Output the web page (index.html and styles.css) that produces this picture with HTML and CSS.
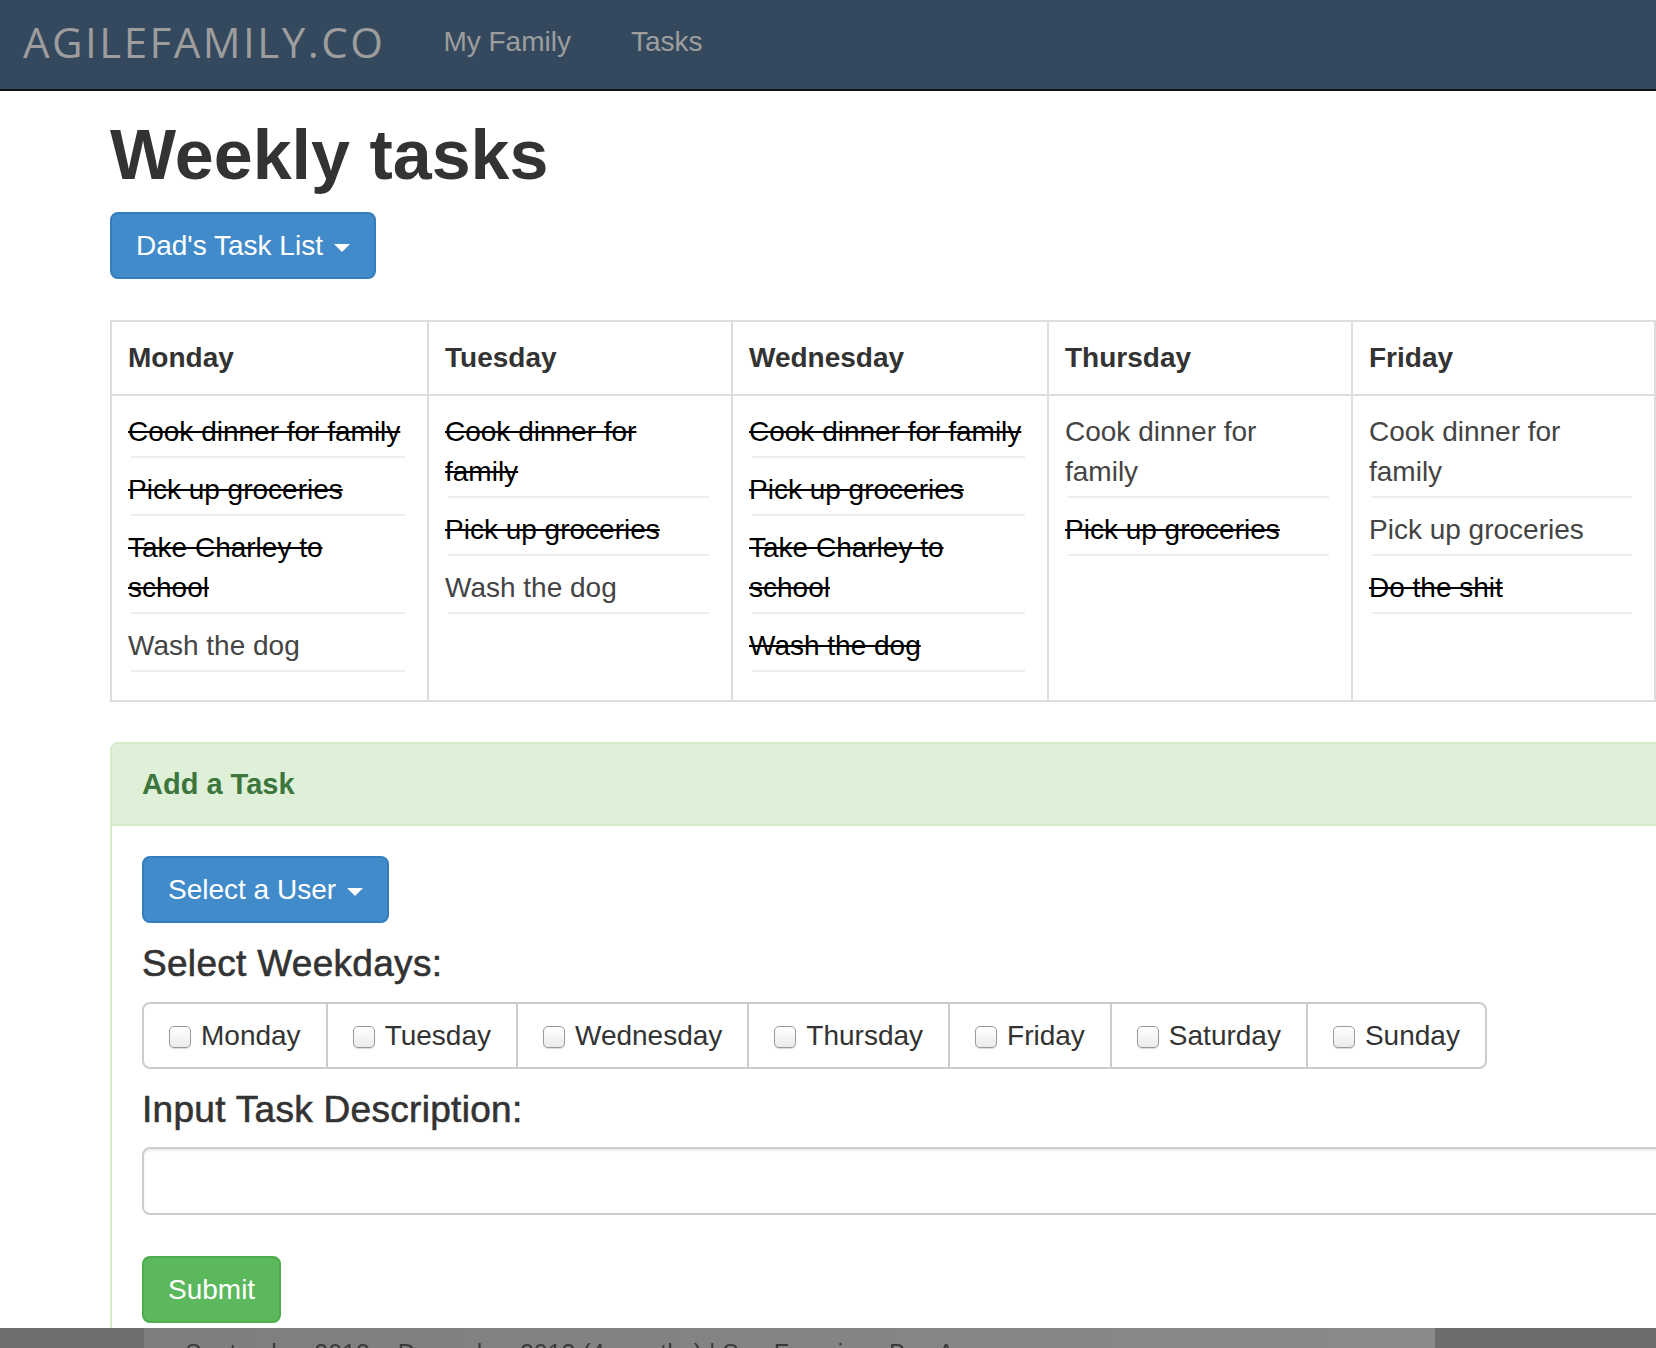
FILE: index.html
```html
<!DOCTYPE html>
<html lang="en">
<head>
<meta charset="utf-8">
<title>Weekly tasks - AgileFamily</title>
<link rel="stylesheet" href="styles.css">
</head>
<body>
<header class="navbar">
  <a class="brand" href="#">AGILEFAMILY.CO</a>
  <nav class="nav">
    <a class="nav-link" href="#">My Family</a>
    <a class="nav-link" href="#">Tasks</a>
  </nav>
</header>

<main class="container">
  <h1 class="title">Weekly tasks</h1>
  <button class="btn btn-primary" type="button">Dad's Task List <span class="caret"></span></button>

  <div class="week">
    <div class="th">Monday</div>
    <div class="th">Tuesday</div>
    <div class="th">Wednesday</div>
    <div class="th">Thursday</div>
    <div class="th">Friday</div>

    <div class="td">
      <div class="task done">Cook dinner for family</div>
      <div class="task done">Pick up groceries</div>
      <div class="task done">Take Charley to school</div>
      <div class="task">Wash the dog</div>
    </div>
    <div class="td">
      <div class="task done">Cook dinner for family</div>
      <div class="task done">Pick up groceries</div>
      <div class="task">Wash the dog</div>
    </div>
    <div class="td">
      <div class="task done">Cook dinner for family</div>
      <div class="task done">Pick up groceries</div>
      <div class="task done">Take Charley to school</div>
      <div class="task done">Wash the dog</div>
    </div>
    <div class="td">
      <div class="task">Cook dinner for family</div>
      <div class="task done">Pick up groceries</div>
    </div>
    <div class="td">
      <div class="task">Cook dinner for family</div>
      <div class="task">Pick up groceries</div>
      <div class="task done">Do the shit</div>
    </div>
  </div>

  <section class="panel">
    <div class="panel-heading">
      <h3 class="panel-title">Add a Task</h3>
    </div>
    <div class="panel-body">
      <button class="btn btn-primary" type="button">Select a User <span class="caret"></span></button>
      <h4 class="form-heading">Select Weekdays:</h4>
      <div class="day-group">
        <label class="day"><input type="checkbox">Monday</label>
        <label class="day"><input type="checkbox">Tuesday</label>
        <label class="day"><input type="checkbox">Wednesday</label>
        <label class="day"><input type="checkbox">Thursday</label>
        <label class="day"><input type="checkbox">Friday</label>
        <label class="day"><input type="checkbox">Saturday</label>
        <label class="day"><input type="checkbox">Sunday</label>
      </div>
      <h4 class="form-heading">Input Task Description:</h4>
      <input class="text-input" type="text">
      <button class="btn btn-success" type="submit">Submit</button>
    </div>
  </section>
</main>

<div class="overlay">
  <div class="overlay-side"></div>
  <div class="overlay-mid"><span class="overlay-text">September 2013 – December 2013 (4 months) | San Francisco Bay Area</span></div>
  <div class="overlay-side overlay-right"></div>
</div>
</body>
</html>
```

FILE: styles.css
```css
* { box-sizing: border-box; }

html, body {
  margin: 0;
  padding: 0;
  overflow: hidden;
}

body {
  font-family: "Liberation Sans", Arial, Helvetica, sans-serif;
  color: #333;
  background: #fff;
  width: 1656px;
  height: 1348px;
}

/* Navbar */
.navbar {
  height: 91px;
  background: #35495e;
  border-bottom: 2px solid #111;
  display: flex;
  align-items: flex-start;
}

.brand {
  font-family: "Open Sans", "Liberation Sans", sans-serif;
  font-size: 42px;
  letter-spacing: 2.5px;
  line-height: 83px;
  color: #9d9d9d;
  margin-left: 23px;
  text-decoration: none;
}

.nav {
  display: flex;
  margin-left: 28px;
}

.nav-link {
  font-size: 28px;
  line-height: 83px;
  color: #9d9d9d;
  padding: 0 30px;
  text-decoration: none;
}

/* Main */
.container {
  padding-left: 110px;
  width: 1800px;
}

.title {
  font-size: 70px;
  font-weight: bold;
  line-height: 77px;
  margin: 26px 0 18px;
  color: #333;
}

.btn {
  display: block;
  font-family: inherit;
  font-size: 28px;
  line-height: 39px;
  padding: 12px 24px;
  border: 2px solid transparent;
  border-radius: 8px;
  color: #fff;
  cursor: pointer;
}

.btn-primary {
  background: #428bca;
  border-color: #357ebd;
}

.btn-success {
  background: #5cb85c;
  border-color: #4cae4c;
  margin-top: 41px;
}

.caret {
  display: inline-block;
  width: 0;
  height: 0;
  border-top: 8px solid #fff;
  border-left: 8px solid transparent;
  border-right: 8px solid transparent;
  margin-left: 3px;
  vertical-align: middle;
}

/* Weekly table */
.week {
  display: grid;
  grid-template-columns: 317px 304px 316px 304px 303px;
  width: 1546px;
  border-top: 2px solid #ddd;
  border-left: 2px solid #ddd;
  margin: 41px 0 40px;
}

.th,
.td {
  padding: 16px;
  border-right: 2px solid #ddd;
  border-bottom: 2px solid #ddd;
}

.th {
  font-size: 28px;
  line-height: 40px;
  font-weight: bold;
  color: #333;
}

.task {
  font-size: 28px;
  line-height: 40px;
  color: #444;
  margin-bottom: 12px;
}

.task::after {
  content: "";
  display: block;
  height: 2px;
  background: #eee;
  margin: 4px 6px 0 3px;
}

.task.done {
  color: #000;
  text-decoration: line-through;
}

/* Panel */
.panel {
  width: 1600px;
  border: 2px solid #d6e9c6;
  border-radius: 8px;
}

.panel-heading {
  background: #dff0d8;
  border-bottom: 2px solid #d6e9c6;
  padding: 20px 30px;
  border-radius: 6px 6px 0 0;
}

.panel-title {
  margin: 0;
  font-size: 29px;
  line-height: 40px;
  font-weight: bold;
  color: #3c763d;
}

.panel-body {
  padding: 30px;
}

.form-heading {
  font-size: 37px;
  letter-spacing: 0.3px;
  font-weight: normal;
  line-height: 39.6px;
  margin: 21px 0 18px;
  color: #333;
  -webkit-text-stroke: 0.6px #333;
}

.day-group {
  display: flex;
}

.day {
  display: block;
  border: 2px solid #ccc;
  padding: 12px 25px;
  font-size: 28px;
  line-height: 39px;
  color: #333;
  background: #fff;
  margin-left: -2px;
  white-space: nowrap;
}

.day:first-child {
  margin-left: 0;
  border-radius: 8px 0 0 8px;
}

.day:last-child {
  border-radius: 0 8px 8px 0;
}

.day input {
  -webkit-appearance: none;
  appearance: none;
  width: 22px;
  height: 22px;
  margin: 0 10px 0 0;
  border: 1px solid #9a9a9a;
  border-radius: 5px;
  background: linear-gradient(#ffffff, #ebebeb);
  box-shadow: 0 1px 1px rgba(0, 0, 0, 0.15);
  vertical-align: -3px;
}

.text-input {
  display: block;
  width: 1600px;
  height: 68px;
  border: 2px solid #ccc;
  border-radius: 8px;
  box-shadow: inset 0 2px 2px rgba(0, 0, 0, 0.075);
  background: #fff;
  font-size: 28px;
  padding: 12px 24px;
}

/* Bottom overlay strip */
.overlay {
  position: fixed;
  left: 0;
  bottom: 0;
  width: 1656px;
  height: 20px;
  display: flex;
  overflow: hidden;
}

.overlay-side {
  width: 144px;
  background: #6f6f6f;
}

.overlay-right {
  width: 221px;
  background: #6c6c6c;
}

.overlay-mid {
  flex: 1;
  background: linear-gradient(to right, #7e7e7e, #8a8a8a);
  padding: 12px 0 0 41px;
}

.overlay-text {
  display: block;
  font-size: 25px;
  line-height: 26px;
  color: #3a3a3a;
  white-space: nowrap;
  filter: blur(0.6px);
}
```
